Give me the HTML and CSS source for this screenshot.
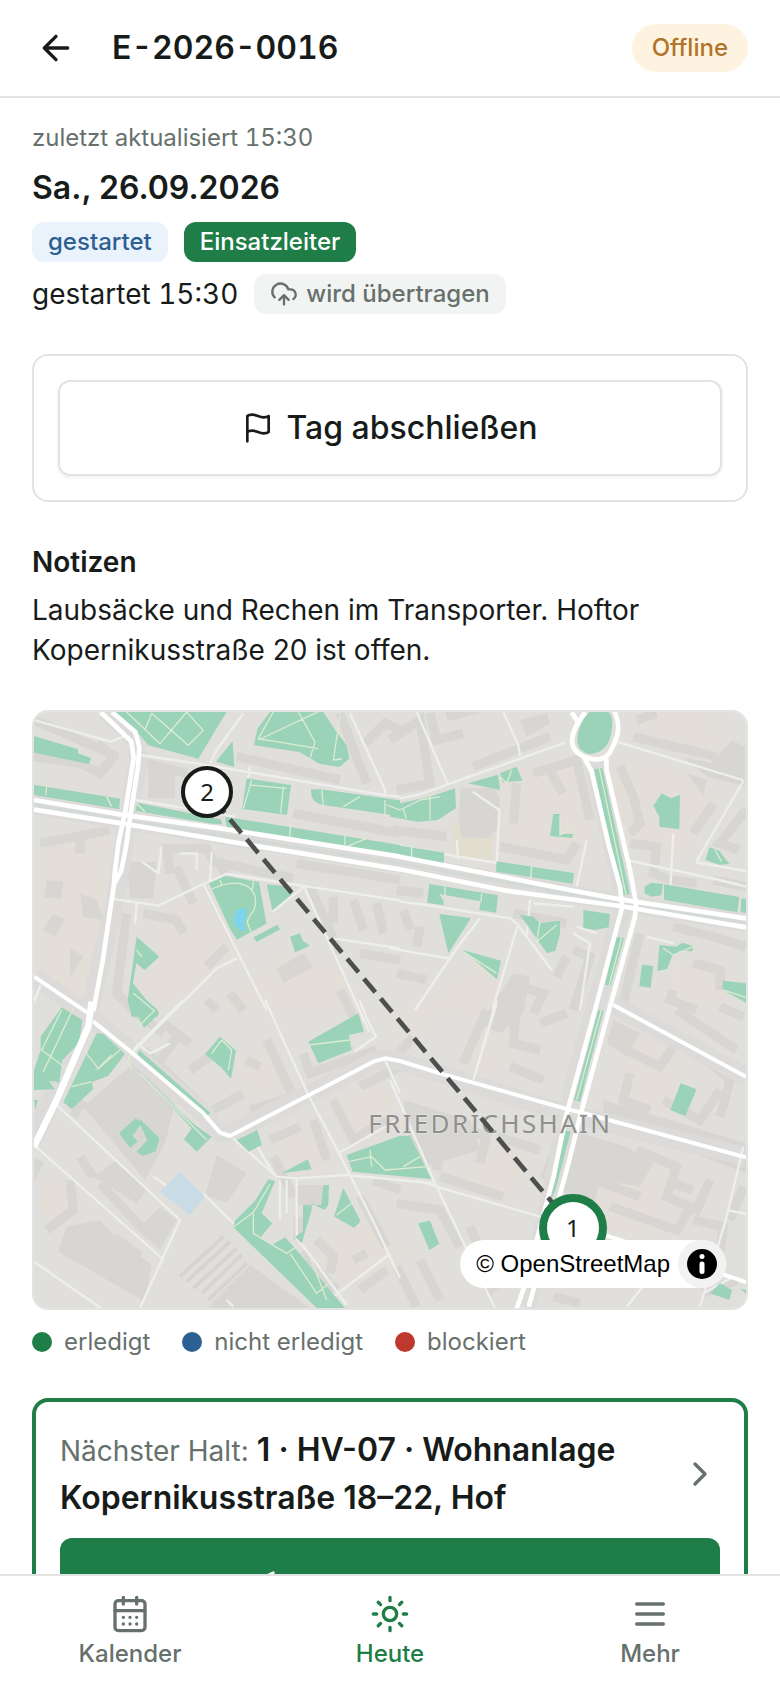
FILE: index.html
```html
<!DOCTYPE html>
<html lang="de">
<head>
<meta charset="utf-8">
<meta name="viewport" content="width=device-width, initial-scale=1">
<title>E-2026-0016</title>
<link rel="stylesheet" href="styles.css">
</head>
<body>
<header class="topbar">
  <button class="back" type="button" aria-label="Zurück">
    <svg class="icon icon-lg" viewBox="0 0 24 24"><path d="m12 19-7-7 7-7M19 12H5"/></svg>
  </button>
  <h1 class="title">E-2026-0016</h1>
  <span class="offline">Offline</span>
</header>

<main class="content">
  <section class="summary">
    <p class="updated">zuletzt aktualisiert 15:30</p>
    <h2 class="date">Sa., 26.09.2026</h2>
    <div class="row">
      <span class="badge badge-info">gestartet</span>
      <span class="badge badge-lead">Einsatzleiter</span>
    </div>
    <div class="row">
      <span class="started">gestartet 15:30</span>
      <span class="badge badge-sync">
        <svg class="icon icon-sm" viewBox="0 0 24 24"><path d="M12 13v8M4 14.899A7 7 0 1 1 15.71 8h1.79a4.5 4.5 0 0 1 2.5 8.242M8 17l4-4 4 4"/></svg>
        wird übertragen
      </span>
    </div>
  </section>

  <section class="card">
    <button class="finish" type="button">
      <svg class="icon icon-md" viewBox="0 0 24 24"><path d="M4 15s1-1 4-1 5 2 8 2 4-1 4-1V3s-1 1-4 1-5-2-8-2-4 1-4 1zM4 22v-7"/></svg>
      Tag abschließen
    </button>
  </section>

  <section class="notes">
    <h2 class="notes-title">Notizen</h2>
    <p class="notes-text">Laubsäcke und Rechen im Transporter. Hoftor Kopernikusstraße 20 ist offen.</p>
  </section>

  <section class="map-section">
    <div class="map">
      <svg class="map-canvas" viewBox="42 36 2136 1788" preserveAspectRatio="xMidYMid slice" role="img" aria-label="Karte">
        <rect class="land" x="42" y="36" width="2136" height="1788"/>

        <g class="yard">
          <path d="M42 460L270 380 260 560 200 930 42 820zM390 480l60-20-10 60-60 10zM420 640l130-60 110 190-240 160-60-60 60-110zM600 930l180-170 180 60 60 110zM1290 440l10-80 130 10-20 120z"/>
          <path d="M1320 830l110-70 10 130-60 60-180-20zM1500 200l180-20 40 220-60 60-300-60zM1830 190l200 30 50 60-90 190-170-40-70-200zM1960 780l170 30-20 110-150-20zM1880 90l220 60-30-110-160-10z"/>
          <path d="M640 1080l120-40 50 110-120 50zM760 1330l120-40 60 120-130 20zM950 1210l130-60 80 120-130 70zM870 1640l140-80 160 90-100 110-130-30zM1380 1330l140 30-50 150-120-30zM1780 1320l160 60-50 240-180-50zM1830 990l160 70-40 180-150-60zM1360 960l130 20-60 150-120-40zM1120 930l120 0-60 110-80-40zM70 1440l90 30-20 80-80-10z"/>
        </g>
        <path class="school" d="M1310 370l110 20-5 100-125-25z"/>

        <g class="block">
          <path d="M1322 265l100 0 18 30-6 90-30 30-80-5-8-60zM320 485h90l-10 110h-70zM80 540l50 5-8 52-50-5zM770 805l80-45 30 40-90 50zM590 1365l90 55-60 90-65-25zM180 580l50 20 20 60-60-10zM100 640l35 20-30 50-35-20zM150 740l40 30-40 60zM385 195h80v100h-80z"/>
          <path d="M190 1220L345 1085l120 125-30 120-60 110zM140 1580l100-20 50 55 105 80-20 110-260-150zM560 1824l130-130 180 130zM830 1455h85v60h-85zM820 1550h30v70h-30zM1500 60l80-20 10 30-70 40zM220 1430l70-50 90 90-30 40zM380 1560l40-40 50 40-50 90-70-60zM1480 820l50 10-20 110-70 60-60-30z"/>
          <path d="M1985 170l90 20 60-70 40 20v120l-110-30zM2000 220l60 20-10 50zM1750 1200l430 130v90L1750 1260zM1560 1430l60-150 200 60 80 50-40 70-120-20-20 90zM1150 1200l200 60 30 90-200 60zM1780 960l80 40-40 70-60-40z"/>
        </g>

        <g class="walls">
          <path d="M42 60l250 110M230 130l50 40-40 50-60-30-138-20M380 190l120 30M650 170l310 70M820 340l320 60M450 520l-10-75h120l20 40 240 50M830 490l310 50M470 500l50 110M60 430l210-40M180 400v60M320 640L290 880l60 60 80 60M370 640l100 20 20 40M560 800l60-60M660 590l-70-110M630 880l40 50M940 590v80M1000 600l30 90M1070 610l20 90M960 870l40 80M870 560l90 200M1020 760l120 20M1035 130l60-60 45 20"/>
          <path d="M960 40l80 210M1110 120l90-60 30 190-100 20M1230 40l20 80 80-20M1280 50l120-30M1360 200l230-90M1490 250l-10 120M1580 200l50 80M1540 220l130-40 40 180M1440 440l200 40 30-50M1480 640l160 30M1120 390l160 20M1130 570l80 10M1150 630l20 60M1200 680l-10 60M1130 820l90 20M1850 60l60-20M1840 110l250 60M1800 200l40 90 20 80-30 30M1830 430l80 10-10 80 50 20 80 10M2080 310l-60 90M2178 330l-80 100 60 20M2080 540l98 20M1860 700l-20 80-30 130M1960 680l120 30 98 30M1660 750l50 20-50 160M1960 870l-10 30 80 30M2020 790l80 20 0 60M1640 770l-30 60M1500 860l70 20-30 60"/>
          <path d="M480 1000l-60 80M430 970l80 60M560 900l30 30M740 1020l80 170-130 40M580 1230l90-50M510 1110l60-40M850 1060l20 60 200-70M760 1370l60 120M750 1320l90-40M880 1260l40 120M940 1200l60 120 100-60M1020 1160l120-60M680 1080l40 20M190 1200l-30 50M350 1130l30 60M370 1050l190 180M180 1370l40 60M60 1380l-30 60M80 1590l80-60-10-90M240 1450l150 160M890 1620l50 50-10 50M1020 1490l80 150M1060 1440l80 30M1000 1680l40-20M280 1610l80 60M1020 1770l80-60M840 1660l110 110"/>
          <path d="M1180 1010l-60 70M1400 930l-70 160M1490 910l-10 120 80 20M1470 1100l100 40M1560 970l80-30M1190 1270l80 20-20 120M1300 1270l100 40-20 80M1430 1310l130 40M1260 1430l190 60M1130 1510l130 20 60 110M1350 1580l40 90M1200 1680l60 120M1130 1700l60 120M1800 1040l120 60 40-60M1830 1120l-20 80 80 30M1930 1200l110 60 60-90M2060 1080l70 60-30 110M1790 1340l-40 110 110 40M1850 1350l120 50-30 90 90 40 40-90M1770 1520l200 70 50-80M1960 1450l60 20M2020 1560l90 20-20 140M2130 1560l40-100M2050 1780l100-40M1970 930l180 120M2100 920l70 30M1400 1780l60-60M1600 1790l80 20"/>
        </g>
        <g class="rails"><path d="M480 1730l130-120M500 1745l130-120M520 1765l130-120M545 1780l120-115M565 1800l115-110"/></g>

        <g class="halo">
          <path d="M42 315L310 360 1140 490 1800 608 2178 668M258 36l90 85 8 60-40 220-30 200-80 340-170 390M42 830l160 110 348 300 50 60h30l430-215 35-10 45 10 500 155 538 130M1720 190l90 380v50l-140 500-150 700M1780 915l398 215"/>
        </g>

        <g class="minor">
          <path d="M42 60l230 65 40-15M360 165l200 30 530 90 50 5M570 190l20-40 80-110M690 200l-20 120M270 595l145 22 135-65 70-30 240 37 280 42M550 552l190 378M650 775l-60 30-120 120-130 130M758 635l95-75M853 560l165 370 30 65M940 715l200 30M990 40l105 230v20M345 300l300 50M42 905l20-50M425 440l-10 80-50-35M350 610l-5 60M480 460h50v50M575 455l-5 90"/>
          <path d="M1140 295l60-12 435-155M1190 36l95 220M1450 36l45 100 5 30M1790 125l378 115M2172 240l-140 240v8l146 25M1140 605l80 10 250 40 20 15 105 140M1380 655l-70 90-125 185M1492 680l-75 250M1110 745l175 30M1120 435l120 22 180 30 180 25M1310 420l5 60M1430 490l8-160-80-55M1660 620l-120-10M1660 700l50 30-30 200M1730 700l-60-20M2178 560l-80-20-280-60M1960 400l-10 180M1880 710l80 20M1530 600l-10 110M1700 420l-30 140"/>
          <path d="M490 900l-150 150M1018 900l20 50 30 60-65 45M735 900l130 285 90 170 110 220 75 160M110 1215l370 345-120 264M42 1335l390 345M42 1685l200 139M640 1315l130 115 60 5 150-10 160 15 100 10M955 1360l185-105M1095 1080l45 100M830 1435v180l40 50 110 150M940 1790l165-125M350 1030l40 30 60-30M640 1820l-20-20M1110 1140l135 310 110 230 70 144M1250 1460l310 90M1430 910l-70 230M1190 1440l90 30M1430 900l-70 240M2170 1340l-50 210-80 270M2120 1530l58 12M1820 1820l80-100M2050 1780l90-50"/>
          <path d="M550 1480l80 80 220 200M700 1320l60 100M800 1440v100M780 1440v120M400 1430l60 40"/>
        </g>

        <g class="park">
          <path d="M285 36h335l-55 90-30 50-150-40-25-30zM750 36h160l40 60 30 40 8 40-30 25-60-10-60-35-136-20 10-50zM588 185l50-62 5 78zM42 108l132 40v12l40 15-8 17L42 158zM42 254l258 42-2 32L42 285zM352 308l250 50 5 15-30-2-230-38zM615 350l525 85v30L620 380zM680 235l133 20-12 90-135-18zM873 268h30l237 33v48l-225-33c-30-5-42-15-42-48zM567 550l50-22 100 18 22 125-88 48-20-30zM740 553l75 8 2 20-60 50zM700 712l72-38 8 14-70 38zM810 710l30-10 8 22 22 15-45 20zM350 710l68 60-44 40-25-20-10 60 40 50 35 30v20H335l-12-50z"/>
          <path d="M1110 308l30 2 90-20 75-25 3 60-55 35-60 5-83-15zM1110 432l162 26v30l-162-20zM1430 484l232 35-4 32-230-36zM1344 250l90-26 6 46zM1440 220l50-20 17 42-60 5zM1600 342h20v60h40l-4 12-66-6zM1925 280l28 15 27-10-2 103-60-8v-30l-18-32zM2056 480l12-38 30 10 30 40-30 2zM1932 553l226 38-6 46-220-38zM1874 560l20-12 35 4-5 34-30 4-20-10zM2164 596h14v44l-16-4zM1228 552l206 34-6 52-50-8 4-26-125-22 14 20v14l-50-8zM1258 642l95 12-68 106zM1500 645l40 5 20 20 60-8v40l-14 50-25 8zM1690 630l80 12-4 40-40 8-36-6zM1328 750l115 32-12 56zM1918 735l50 5 20-12 30 10v16l-38-2-24 16-14 38-30 8zM1866 794l34 4-8 66-34-6zM2108 842l70 8v58l-70-38zM1722 208l25-4 83 378-25 5zM1788 712l24 2-40 144-17-4zM1735 930l16 2-71 273-18-4zM1628 1292l24 2-44 170-25 60z"/>
          <path d="M125 922l62 38-10 70-50 50-10 70-10-6-20 0 18 24-63 2v-60l20-60 0-40zM42 1200h12l-8 30zM230 1000l20 2 65 60-50 65-50 20 5 20-65 60-25-20zM357 1050l75 65 140 125-20 12-100-95-100-92zM357 1112l128 128 40 35 50 35-45 45-38-37 23-33-37-40zM600 1010l48 42-15 85-30-35-48-40zM297 1300l50-45 18 15-28 38 16 16-22 20zM360 1258l58 56-10 40-40 14-18-12 32-36-24-52zM865 1025l150-85 17 55-45 10 8 45-100 40zM650 1320l62-30 14 45-40 20zM785 1420l78-42 12 30zM980 1365l160-58 30 0 64 130-236-22zM745 1438l20 5-40 97 32 30-34 40 32 25 40-23 30 33 150 179h-85L640 1582l5-20 60-60zM910 1455h17l-2 60-12 15-38-20 0 20-30 100-20-20 24-16v-79h55zM970 1464l52 100-20 20-60-35zM330 900l40 0 48 40-46 44zM1194 1570l36-8 28 70-30 18zM1982 1150l48 18-34 80-45-18zM2070 1780l30-30 36 20-8 30zM2160 1765l18 6v10z"/>
          <path d="M1710 36h55c17 14 13 49 5 79-10 30-30 45-60 47-25-2-40-22-38-47 3-30 18-65 38-79z"/>
        </g>
        <g class="path">
          <path d="M320 36l100 95 80-95 50 55-45 45L395 40 375 90M715 120l180-85M760 36l-45 80 180 30M835 36l50 90-15 50M960 50l-20 130 25-3M600 540l5 15M570 570c60-30 120-30 135 20 10 50-30 60-22 80l10 25M700 545l-3 25M695 240l-25 85M690 255l110 10M790 260l-8 80M905 268l5 50M1020 290l-50 30M1095 300v50M1140 330l-40-15M80 255l-2 30M260 290l15 30M350 310l25 25M812 375l-3 35M975 400v35M980 440l60-25M340 880l60 50M350 750l15 20M1140 330l60-30 60-10M1230 285v75M1150 325l8 30M1175 440v35M1535 498l-3 40M1275 560v25M1385 580l-2 25M1440 230l20 20 15-40M1620 345v60l35-20M1560 665l-10 60 60-50M1330 755l100 65M1930 745l30 20 60-25M2085 450l20 35M1738 205l80 378M1805 712l-38 145M2110 870l68 22"/>
          <path d="M160 925l-90 190M125 930l-60 120 80 60M195 1055l40 50 40-40M300 1050l-70 60M155 1160l60-15M355 1050l-30 20 10 40M360 1120l200 200M865 1035l125-15M575 1060l30-40 30 30-10 60M640 1582l60-45 50-85M700 1540v60l100 60 30-20M810 1660l80 120 50-40M950 1545l50-40M985 1385l70-15 40 40 130-10M1050 1350l5 50M1635 1294l-40 170M1744 930l-74 270M870 1670l50 130M355 980l50-50M1150 1400l50-30"/>
        </g>
        <path class="water" d="M650 630l20-6 10 4-2 24-6 18 4 20-12 4-20-18-4-24z"/>
        <path class="pool" d="M480 1415l75 75-45 55-90-70z"/>

        <g class="secondary">
          <path d="M42 830l160 108M220 965l130 105 200 170 50 58 30 10 430-223 35-10 45 8 120 37 380 107 60 15 478 130M1780 915l398 215M1740 1600l438 146"/>
        </g>
        <g class="median"><path d="M42 316L310 360 1140 490 1800 608 2178 668"/></g>
        <g class="major">
          <path d="M42 300L300 343 600 385 1140 470 1660 572 1800 598 2178 655M42 329L310 371 720 440 1140 508 1460 572 1800 618 2178 682"/>
          <path d="M242 36l92 88 7 50-25 160-20 90-12 96-2 32M276 36l70 60 12 45-4 60-22 140-14 100-14 70-22 42-34 230-28 150"/>
          <path d="M1655 36l18 30M1696 36C1670 70 1650 110 1658 135c7 25 37 43 72 43s45-28 55-53c15-30 10-65-2-92"/>
          <path d="M1690 168l25 47 50 215 35 130 7 60-82 310-90 330-34 170-88 330-28 80M1758 165l2 45 70 300 18 100-3 40-75 270-90 330-32 130-60 220-62 220"/>
        </g>
        <g class="trunk"><path d="M215 905l-10 75-35 80-60 140-68 140"/></g>

        <text class="district" x="1045" y="1300">FRIEDRICHSHAIN</text>
        <path class="route" d="M560 275L1660 1583"/>
      </svg>
      <button class="pin pin-open" type="button">2</button>
      <button class="pin pin-next" type="button">1</button>
      <div class="attribution">
        <a class="osm" href="#osm">© OpenStreetMap</a>
        <button class="info" type="button" aria-label="Info">
          <svg class="info-icon" viewBox="0 0 24 24"><circle cx="12" cy="12" r="12"/><circle class="info-mark" cx="12" cy="6" r="2"/><rect class="info-mark" x="10" y="10" width="4" height="10" rx="2"/></svg>
        </button>
      </div>
    </div>
    <ul class="legend">
      <li class="legend-item"><span class="dot dot-done"></span>erledigt</li>
      <li class="legend-item"><span class="dot dot-open"></span>nicht erledigt</li>
      <li class="legend-item"><span class="dot dot-blocked"></span>blockiert</li>
    </ul>
  </section>

  <section class="next">
    <a class="next-link" href="#halt">
      <span class="next-text"><span class="next-label">Nächster Halt:</span> 1 · HV-07 · Wohnanlage Kopernikusstraße 18–22, Hof</span>
      <svg class="icon icon-lg" viewBox="0 0 24 24"><path d="m9 18 6-6-6-6"/></svg>
    </a>
    <button class="navigate" type="button" aria-label="Navigation">
      <svg class="icon icon-md" viewBox="0 0 24 24"><path d="M3 11l19-9-9 19-2-8z"/></svg>
    </button>
  </section>
</main>

<nav class="tabs">
  <a class="tab" href="#kalender">
    <svg class="icon icon-lg" viewBox="0 0 24 24"><rect x="3" y="4" width="18" height="18" rx="2"/><path d="M8 2v4M16 2v4M3 10h18M8 14h.01M12 14h.01M16 14h.01M8 18h.01M12 18h.01M16 18h.01"/></svg>
    Kalender
  </a>
  <a class="tab tab-active" href="#heute" aria-current="page">
    <svg class="icon icon-lg" viewBox="0 0 24 24"><circle cx="12" cy="12" r="4"/><path d="M12 2v2M12 20v2M4.93 4.93l1.41 1.41M17.66 17.66l1.41 1.41M2 12h2M20 12h2M6.34 17.66l-1.41 1.41M19.07 4.93l-1.41 1.41"/></svg>
    Heute
  </a>
  <a class="tab" href="#mehr">
    <svg class="icon icon-lg" viewBox="0 0 24 24"><path d="M4 6h16M4 12h16M4 18h16"/></svg>
    Mehr
  </a>
</nav>
</body>
</html>
```
FILE: styles.css
```css
:root {
  --ink: #171c1a;
  --muted: #66716c;
  --line: #e1e4e2;
  --green: #1f7d47;
  --blue: #2c5f92;
  --red: #bf382e;
}

* { box-sizing: border-box; margin: 0; padding: 0; }

body {
  display: flex;
  flex-direction: column;
  height: 100vh;
  background: #fff;
  color: var(--ink);
  font-family: Inter, "Liberation Sans", sans-serif;
  font-size: 28px;
  line-height: 40px;
  font-variation-settings: "opsz" 14;
}

button { font: inherit; font-variation-settings: inherit; color: inherit; border: 0; background: none; cursor: pointer; }
a { color: inherit; text-decoration: none; }

.icon { flex: none; fill: none; stroke: currentColor; stroke-width: 2; stroke-linecap: round; stroke-linejoin: round; }
.icon-sm { width: 28px; height: 28px; }
.icon-md { width: 32px; height: 32px; }
.icon-lg { width: 40px; height: 40px; }

.topbar {
  display: flex;
  align-items: center;
  gap: 16px;
  padding: 8px 32px 8px 16px;
  border-bottom: 2px solid var(--line);
}
.back { display: grid; place-items: center; width: 80px; height: 80px; }
.title { flex: 1; font-size: 32px; font-weight: 600; font-variant-numeric: tabular-nums; font-variation-settings: "opsz" 20; }
.offline {
  padding: 8px 20px;
  border-radius: 24px;
  background: #fdf3e0;
  color: #b0752a;
  font-size: 24px;
  line-height: 32px;
  font-weight: 500;
}

.content {
  flex: 1;
  min-height: 0;
  display: flex;
  flex-direction: column;
  gap: 40px;
  padding: 24px 32px 40px;
  overflow-y: auto;
  scrollbar-width: none;
}
.content > * { flex: none; }

.summary { display: flex; flex-direction: column; gap: 12px; }
.updated { color: var(--muted); font-size: 24px; line-height: 32px; font-variant-numeric: tabular-nums; }
.date { font-size: 32px; line-height: 44px; font-weight: 600; font-variation-settings: "opsz" 24; }
.row { display: flex; align-items: center; gap: 16px; }
.started { font-variant-numeric: tabular-nums; }
.badge {
  display: inline-flex;
  align-items: center;
  gap: 8px;
  padding: 4px 16px;
  border-radius: 12px;
  font-size: 24px;
  line-height: 32px;
  font-weight: 500;
}
.badge-info { background: #eaf2fb; color: var(--blue); }
.badge-lead { background: var(--green); color: #fff; }
.badge-sync { background: #f2f4f3; color: var(--muted); }

.card { padding: 24px; border: 2px solid var(--line); border-radius: 16px; }
.finish {
  display: flex;
  align-items: center;
  justify-content: center;
  gap: 12px;
  width: 100%;
  height: 96px;
  border: 2px solid var(--line);
  border-radius: 12px;
  box-shadow: 0 2px 4px rgba(0, 0, 0, .06);
  font-size: 32px;
  font-weight: 500;
}

.notes { display: flex; flex-direction: column; gap: 8px; }
.notes-title { font-size: 28px; font-weight: 600; }

.map-section { display: flex; flex-direction: column; gap: 16px; }
.map { position: relative; height: 600px; border: 2px solid var(--line); border-radius: 16px; overflow: hidden; }
.map-canvas { display: block; width: 100%; height: 100%; stroke-linejoin: round; }
.land { fill: #e1dfdb; }
.yard { fill: #e4ded8; }
.school { fill: #e1dece; }
.block { fill: #d7d6d3; }
.walls { fill: none; stroke: #d7d6d3; stroke-width: 28; stroke-linejoin: miter; }
.rails { fill: none; stroke: #d5d4d1; stroke-width: 11; }
.halo { fill: none; stroke: #dcdbd9; stroke-width: 56; }
.minor { fill: none; stroke: #eeeeed; stroke-width: 7; }
.park { fill: #9bd3b8; }
.path { fill: none; stroke: #dcebd2; stroke-width: 4; }
.water { fill: #7fd3ea; }
.pool { fill: #c9dce6; }
.secondary { fill: none; stroke: #fff; stroke-width: 12; }
.median { fill: none; stroke: #d3dad6; stroke-width: 9; }
.major { fill: none; stroke: #fff; stroke-width: 14; }
.trunk { fill: none; stroke: #fff; stroke-width: 20; }
.district {
  fill: #8f8f8e;
  stroke: #e4e3e1;
  stroke-width: 4;
  paint-order: stroke;
  font-family: "Noto Sans", sans-serif;
  font-size: 78px;
  letter-spacing: 7px;
}
.route { fill: none; stroke: #4c4f4d; stroke-width: 14; stroke-dasharray: 53 25; stroke-dashoffset: 47; }

.pin {
  position: absolute;
  display: grid;
  place-items: center;
  transform: translate(-50%, -50%);
  border-radius: 50%;
  background: #fff;
  font-family: "Noto Sans", sans-serif;
  font-size: 24px;
  line-height: 32px;
}
.pin-open { left: 24.3%; top: 13.4%; width: 52px; height: 52px; border: 4px solid var(--ink); }
.pin-next { left: 75.7%; top: 86.6%; width: 68px; height: 68px; border: 8px solid var(--green); }

.attribution {
  position: absolute;
  right: 20px;
  bottom: 20px;
  display: flex;
  align-items: center;
  gap: 8px;
  padding-left: 16px;
  border-radius: 24px;
  background: #fff;
  color: #000;
  font-family: "Liberation Sans", sans-serif;
  font-size: 24px;
}
.info { display: grid; place-items: center; width: 48px; height: 48px; border-radius: 50%; background: #f2f2f2; }
.info-icon { width: 30px; height: 30px; }
.info-mark { fill: #fff; }

.legend { display: flex; flex-wrap: wrap; gap: 32px; list-style: none; color: var(--muted); font-size: 24px; line-height: 32px; }
.legend-item { display: flex; align-items: center; gap: 12px; }
.dot { width: 20px; height: 20px; border-radius: 50%; }
.dot-done { background: var(--green); }
.dot-open { background: var(--blue); }
.dot-blocked { background: var(--red); }

.next { display: flex; flex-direction: column; gap: 16px; padding: 24px; border: 4px solid var(--green); border-radius: 16px; }
.next-link { display: flex; align-items: center; gap: 24px; color: var(--muted); }
.next-text { flex: 1; color: var(--ink); font-size: 32px; line-height: 48px; font-weight: 600; }
.next-label { color: var(--muted); font-size: 28px; line-height: 32px; font-weight: 400; }
.navigate {
  display: flex;
  align-items: center;
  height: 96px;
  padding-left: 184px;
  border-radius: 12px;
  background: var(--green);
  color: #fff;
}

.tabs { flex: none; display: grid; grid-template-columns: repeat(3, 1fr); border-top: 2px solid var(--line); background: #fff; }
.tab {
  display: flex;
  flex-direction: column;
  align-items: center;
  gap: 4px;
  padding: 18px 0;
  color: var(--muted);
  font-size: 24px;
  line-height: 32px;
  font-weight: 500;
}
.tab-active { color: var(--green); }
```
